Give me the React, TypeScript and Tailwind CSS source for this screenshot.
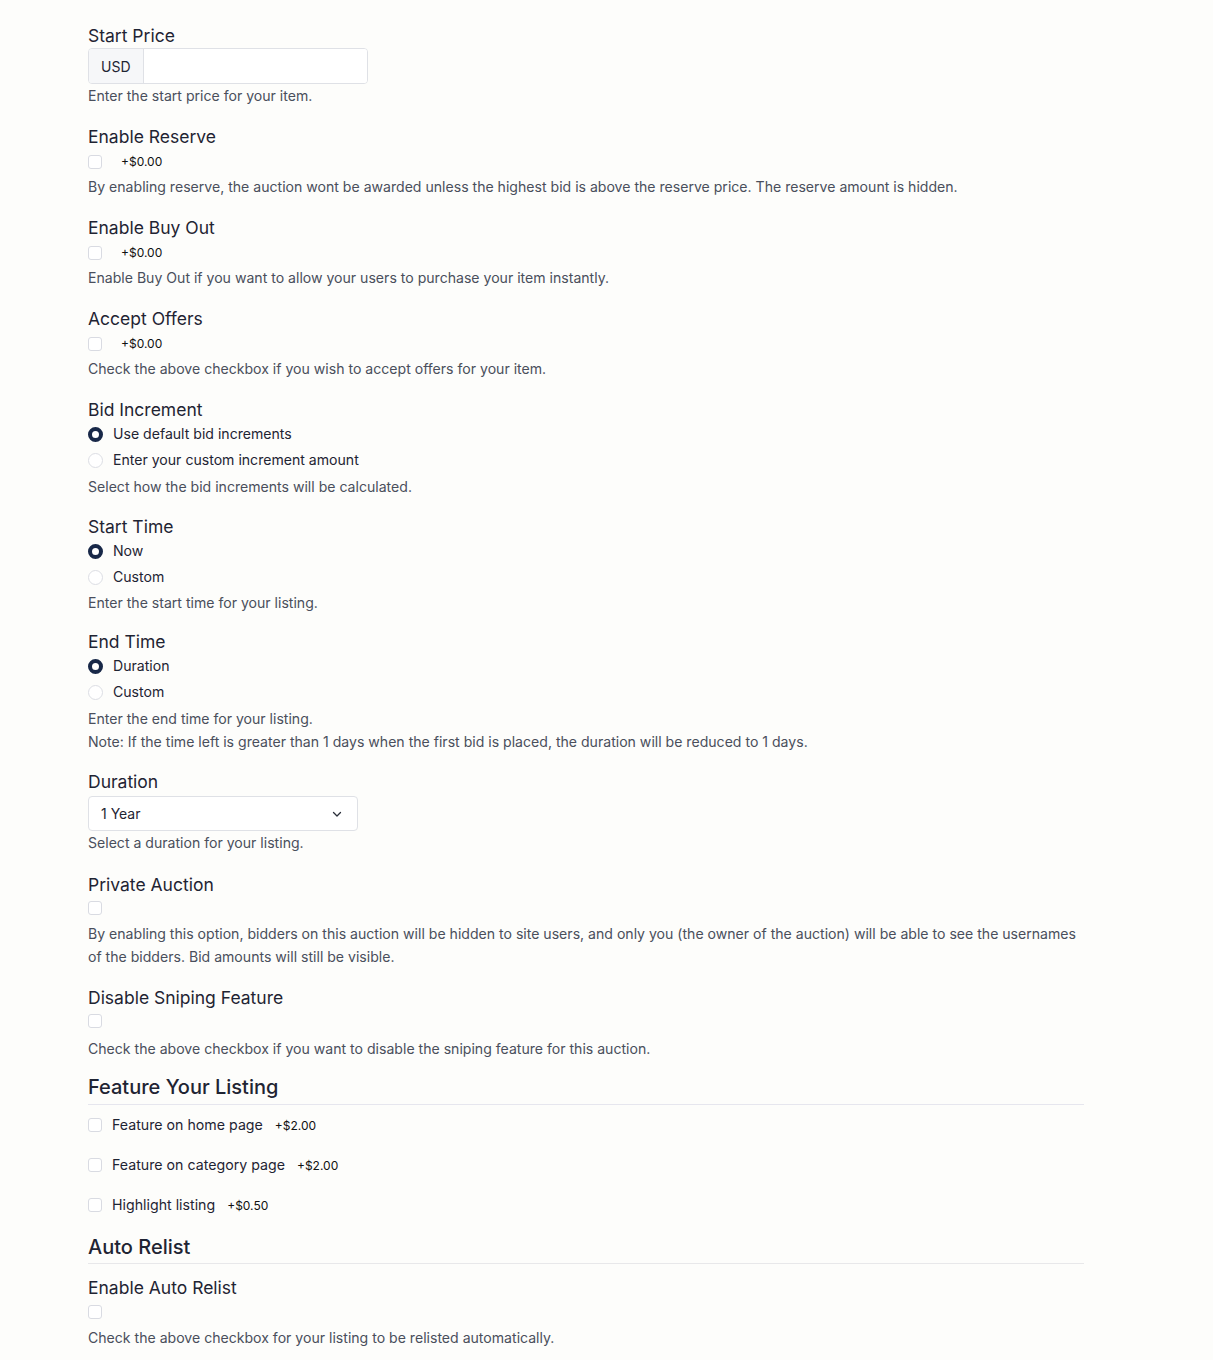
import type { ReactNode } from "react"

const labelCls = "block text-[17.5px] leading-[26px] text-[#1f2433]"
const descCls = "text-[14.08px] leading-[23px] text-[#4a4f5c]"

function Box() {
  return <span className="inline-block size-[14px] shrink-0 rounded-[3px] border border-[#d9dbe2] bg-white" />
}

function Radio({ checked, children }: { checked?: boolean; children: ReactNode }) {
  return (
    <div className="flex h-[26px] items-center gap-[10px]">
      {checked ? (
        <span className="inline-block size-[15px] shrink-0 rounded-full border-[4px] border-[#182848] bg-white" />
      ) : (
        <span className="inline-block size-[15px] shrink-0 rounded-full border border-[#dcdee4] bg-white" />
      )}
      <span className="text-[14.08px] text-[#1f2433]">{children}</span>
    </div>
  )
}

function CheckPrice({ price }: { price?: string }) {
  return (
    <div className="flex h-[24px] items-center">
      <Box />
      {price ? <span className="ml-[19px] text-[12px] text-[#111111]">{price}</span> : null}
    </div>
  )
}

function Field({ label, gap = "mb-[16px]", children }: { label: string; gap?: string; children: ReactNode }) {
  return (
    <div className={gap}>
      <label className={labelCls}>{label}</label>
      {children}
    </div>
  )
}

function FeatureRow({ label, price }: { label: string; price: string }) {
  return (
    <div className="flex h-[40px] items-center">
      <Box />
      <span className="ml-[10px] flex items-baseline">
        <span className="text-[14.2px] text-[#1f2433]">{label}</span>
        <span className="ml-[12px] text-[12px] text-[#111111]">{price}</span>
      </span>
    </div>
  )
}

export default function App() {
  return (
    <div className="min-h-[1360px] bg-[#fdfdfb] pt-[23px] pl-[88px] font-['Inter','Noto_Sans',sans-serif]">
      <div className="w-[996px]">
        <div className="mb-[17px]">
          <label className={`${labelCls} mb-[-1px]`}>Start Price</label>
          <div className="flex h-[36px] w-[280px] overflow-hidden rounded-[4px] border border-[#dfe1e6] bg-white">
            <span className="flex items-center border-r border-[#dfe1e6] bg-[#f6f7f9] px-[12px] text-[14px] text-[#1f2433]">USD</span>
            <input className="min-w-0 flex-1 bg-white px-2 outline-none" />
          </div>
          <p className={descCls}>Enter the start price for your item.</p>
        </div>

        <Field label="Enable Reserve" gap="mb-[17px]">
          <CheckPrice price="+$0.00" />
          <p className={`${descCls} pt-[1px]`}>
            By enabling reserve, the auction wont be awarded unless the highest bid is above the reserve price. The reserve amount is hidden.
          </p>
        </Field>

        <Field label="Enable Buy Out" gap="mb-[17px]">
          <CheckPrice price="+$0.00" />
          <p className={`${descCls} pt-[1px]`}>Enable Buy Out if you want to allow your users to purchase your item instantly.</p>
        </Field>

        <Field label="Accept Offers" gap="mb-[17px]">
          <CheckPrice price="+$0.00" />
          <p className={`${descCls} pt-[1px]`}>Check the above checkbox if you wish to accept offers for your item.</p>
        </Field>

        <Field label="Bid Increment" gap="mb-[16px]">
          <div className="mt-[-2px]">
            <Radio checked>Use default bid increments</Radio>
            <Radio>Enter your custom increment amount</Radio>
          </div>
          <p className={`${descCls} pt-[2px]`}>Select how the bid increments will be calculated.</p>
        </Field>

        <Field label="Start Time" gap="mb-[15px]">
          <div className="mt-[-2px]">
            <Radio checked>Now</Radio>
            <Radio>Custom</Radio>
          </div>
          <p className={`${descCls} pt-[1px]`}>Enter the start time for your listing.</p>
        </Field>

        <Field label="End Time">
          <div className="mt-[-2px]">
            <Radio checked>Duration</Radio>
            <Radio>Custom</Radio>
          </div>
          <p className={`${descCls} pt-[2px]`}>Enter the end time for your listing.</p>
          <p className={descCls}>
            Note: If the time left is greater than 1 days when the first bid is placed, the duration will be reduced to 1 days.
          </p>
        </Field>

        <Field label="Duration" gap="mb-[18px]">
          <div className="mt-[1px] flex h-[35px] w-[270px] items-center justify-between rounded-[4px] border border-[#dfe1e6] bg-white pr-[14px] pl-[12px]">
            <span className="text-[14px] text-[#1f2433]">1 Year</span>
            <svg width="12" height="12" viewBox="0 0 24 24" fill="none" stroke="#2a2f3a" strokeWidth="2.6" strokeLinecap="round" strokeLinejoin="round">
              <path d="M5 9l7 7 7-7" />
            </svg>
          </div>
          <p className={descCls}>Select a duration for your listing.</p>
        </Field>

        <Field label="Private Auction" gap="mb-[17px]">
          <div className="mt-[-2px] flex h-[24px] items-center">
            <Box />
          </div>
          <p className={`${descCls} pt-[2px]`}>
            By enabling this option, bidders on this auction will be hidden to site users, and only you (the owner of the auction) will be able to see the usernames of the bidders. Bid amounts will still be visible.
          </p>
        </Field>

        <Field label="Disable Sniping Feature">
          <div className="mt-[-2px] flex h-[24px] items-center">
            <Box />
          </div>
          <p className={`${descCls} pt-[4px]`}>Check the above checkbox if you want to disable the sniping feature for this auction.</p>
        </Field>

        <h2 className="mt-[-3px] border-b border-[#e6e6ee] pb-[3px] text-[20px] leading-[28px] font-medium text-[#1f2433]">Feature Your Listing</h2>
        <FeatureRow label="Feature on home page" price="+$2.00" />
        <FeatureRow label="Feature on category page" price="+$2.00" />
        <FeatureRow label="Highlight listing" price="+$0.50" />

        <h2 className="mt-[8px] border-b border-[#e8e8ea] pb-[2px] text-[20px] leading-[28px] font-medium text-[#1f2433]">Auto Relist</h2>
        <div className="mt-[11px]">
          <label className={labelCls}>Enable Auto Relist</label>
          <div className="mt-[-1px] flex h-[24px] items-center">
            <Box />
          </div>
          <p className={`${descCls} pt-[2px]`}>Check the above checkbox for your listing to be relisted automatically.</p>
        </div>
      </div>
    </div>
  )
}
